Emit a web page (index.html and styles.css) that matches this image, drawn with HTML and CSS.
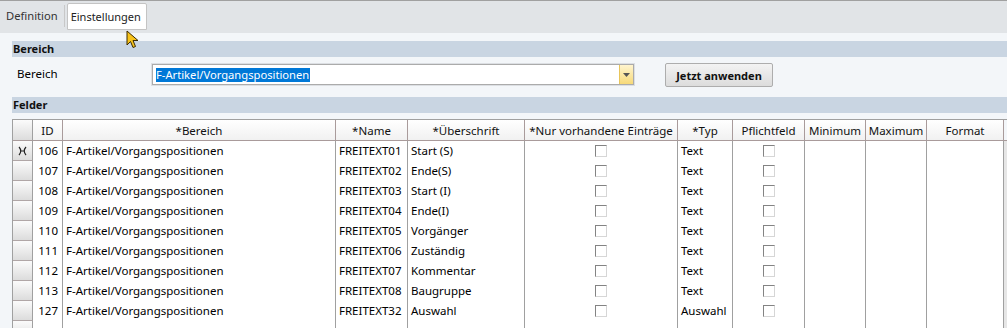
FILE: index.html
```html
<!DOCTYPE html>
<html lang="de">
<head>
<meta charset="utf-8">
<title>Einstellungen</title>
<link rel="stylesheet" href="styles.css">
</head>
<body>
<div class="tabbar">
  <div class="tab">Definition</div>
  <div class="tab-sep"></div>
  <div class="tab active">Einstellungen</div>
</div>
<div class="content">
  <div class="section">Bereich</div>
  <div class="form-row">
    <div class="label">Bereich</div>
    <div class="combo">
      <div class="combo-inner">
        <div class="combo-field"><span class="sel">F-Artikel/Vorgangspositionen</span></div>
        <div class="combo-btn"><svg width="7" height="4" viewBox="0 0 7 4"><path d="M0 0H7L3.5 4Z" fill="#555"/></svg></div>
      </div>
    </div>
    <button class="btn">Jetzt anwenden</button>
  </div>
  <div class="section section-felder">Felder</div>
  <div class="grid">
    <div class="rh hdr-rh"></div>
    <div class="hc">ID</div>
    <div class="hc">*Bereich</div>
    <div class="hc">*Name</div>
    <div class="hc">*Überschrift</div>
    <div class="hc">*Nur vorhandene Einträge</div>
    <div class="hc">*Typ</div>
    <div class="hc">Pflichtfeld</div>
    <div class="hc">Minimum</div>
    <div class="hc">Maximum</div>
    <div class="hc">Format</div>
    <div class="hc hc-end"></div>

    <div class="rh"><svg width="9" height="10" viewBox="0 0 9 10"><path d="M1 1Q4.5 5 1 9M8 1Q4.5 5 8 9M2.5 5H6.5" stroke="#222" stroke-width="1.2" fill="none"/></svg></div>
    <div class="c num">106</div><div class="c">F-Artikel/Vorgangspositionen</div><div class="c">FREITEXT01</div><div class="c">Start (S)</div><div class="c ctr"><span class="cb"></span></div><div class="c">Text</div><div class="c ctr"><span class="cb"></span></div><div class="c"></div><div class="c"></div><div class="c"></div><div class="c end"></div>

    <div class="rh"></div>
    <div class="c num">107</div><div class="c">F-Artikel/Vorgangspositionen</div><div class="c">FREITEXT02</div><div class="c">Ende(S)</div><div class="c ctr"><span class="cb"></span></div><div class="c">Text</div><div class="c ctr"><span class="cb"></span></div><div class="c"></div><div class="c"></div><div class="c"></div><div class="c end"></div>

    <div class="rh"></div>
    <div class="c num">108</div><div class="c">F-Artikel/Vorgangspositionen</div><div class="c">FREITEXT03</div><div class="c">Start (I)</div><div class="c ctr"><span class="cb"></span></div><div class="c">Text</div><div class="c ctr"><span class="cb"></span></div><div class="c"></div><div class="c"></div><div class="c"></div><div class="c end"></div>

    <div class="rh"></div>
    <div class="c num">109</div><div class="c">F-Artikel/Vorgangspositionen</div><div class="c">FREITEXT04</div><div class="c">Ende(I)</div><div class="c ctr"><span class="cb"></span></div><div class="c">Text</div><div class="c ctr"><span class="cb"></span></div><div class="c"></div><div class="c"></div><div class="c"></div><div class="c end"></div>

    <div class="rh"></div>
    <div class="c num">110</div><div class="c">F-Artikel/Vorgangspositionen</div><div class="c">FREITEXT05</div><div class="c">Vorgänger</div><div class="c ctr"><span class="cb"></span></div><div class="c">Text</div><div class="c ctr"><span class="cb"></span></div><div class="c"></div><div class="c"></div><div class="c"></div><div class="c end"></div>

    <div class="rh"></div>
    <div class="c num">111</div><div class="c">F-Artikel/Vorgangspositionen</div><div class="c">FREITEXT06</div><div class="c">Zuständig</div><div class="c ctr"><span class="cb"></span></div><div class="c">Text</div><div class="c ctr"><span class="cb"></span></div><div class="c"></div><div class="c"></div><div class="c"></div><div class="c end"></div>

    <div class="rh"></div>
    <div class="c num">112</div><div class="c">F-Artikel/Vorgangspositionen</div><div class="c">FREITEXT07</div><div class="c">Kommentar</div><div class="c ctr"><span class="cb"></span></div><div class="c">Text</div><div class="c ctr"><span class="cb"></span></div><div class="c"></div><div class="c"></div><div class="c"></div><div class="c end"></div>

    <div class="rh"></div>
    <div class="c num">113</div><div class="c">F-Artikel/Vorgangspositionen</div><div class="c">FREITEXT08</div><div class="c">Baugruppe</div><div class="c ctr"><span class="cb"></span></div><div class="c">Text</div><div class="c ctr"><span class="cb"></span></div><div class="c"></div><div class="c"></div><div class="c"></div><div class="c end"></div>

    <div class="rh"></div>
    <div class="c num">127</div><div class="c">F-Artikel/Vorgangspositionen</div><div class="c">FREITEXT32</div><div class="c">Auswahl</div><div class="c ctr"><span class="cb"></span></div><div class="c">Auswahl</div><div class="c ctr"><span class="cb"></span></div><div class="c"></div><div class="c"></div><div class="c"></div><div class="c end"></div>

    <div class="rh"></div>
    <div class="c"></div><div class="c"></div><div class="c"></div><div class="c"></div><div class="c"></div><div class="c"></div><div class="c"></div><div class="c"></div><div class="c"></div><div class="c"></div><div class="c end"></div>
  </div>
</div>
<svg class="cursor" width="14" height="20" viewBox="0 0 14 20"><path d="M1 1V15L4.5 11.5L7 17.5L9.5 16.5L7 10.5H12Z" fill="#f7c21b" stroke="#3a2a00" stroke-width="1" stroke-linejoin="round"/></svg>
</body>
</html>
```

FILE: styles.css
```css
html, body {
  margin: 0;
  padding: 0;
}
body {
  width: 1007px;
  height: 328px;
  overflow: hidden;
  position: relative;
  font-family: "Noto Sans", "Open Sans", sans-serif;
  font-size: 11px;
  color: #000;
  background: #f3f6f9;
}
.tabbar {
  height: 32px;
  border-top: 1px solid #a0a0a0;
  background: #e1e4e7;
  display: flex;
  align-items: flex-start;
}
.tab {
  font-size: 11.2px;
  color: #333;
  height: 26px;
  line-height: 26px;
  margin-top: 2px;
  padding: 0 6px;
}
.tab-sep {
  width: 1px;
  height: 22px;
  margin-top: 4px;
  background: #c8c8c8;
  margin-right: 2px;
}
.tab.active {
  background: #fff;
  border: 1px solid #c4c4c4;
  border-radius: 2px 2px 0 0;
  padding: 0 5px 0 3px;
  color: #222;
  font-size: 11px;
  height: 25px;
  line-height: 25px;
}
.content {
  padding: 8px 0 0 12px;
}
.section {
  height: 16px;
  line-height: 16px;
  background: #c9d5e2;
  font-weight: bold;
  padding-left: 1px;
  font-size: 11px;
  color: #111;
}
.form-row {
  display: flex;
  align-items: flex-start;
  margin-top: 6px;
  height: 24px;
}
.label {
  width: 134px;
  margin-left: 5px;
  line-height: 21px;
  font-size: 11.5px;
}
.combo {
  width: 484px;
  height: 23px;
  box-sizing: border-box;
  border: 1px solid #dcdfe3;
  background: #fff;
}
.combo-inner {
  height: 100%;
  box-sizing: border-box;
  border: 1px solid #ababab;
  display: flex;
}
.combo-field {
  flex: 1;
  padding: 2px 0 0 3px;
}
.sel {
  display: inline-block;
  background: #0078d7;
  color: #fff;
  line-height: 14px;
  height: 14px;
  font-size: 11.2px;
  padding-right: 1px;
}
.combo-btn {
  width: 13px;
  border-left: 1px solid #e8c55a;
  background: linear-gradient(#fff5cf, #f7d979);
  display: flex;
  align-items: center;
  justify-content: center;
}
.btn {
  margin-left: 30px;
  width: 108px;
  height: 24px;
  border: 1px solid #adadad;
  border-radius: 2px;
  background: linear-gradient(#f3f3f3, #dcdcdc);
  font-family: "Noto Sans", "Open Sans", sans-serif;
  font-weight: bold;
  font-size: 11px;
  color: #111;
  padding: 0;
}
.section-felder {
  margin-top: 10px;
}
.grid {
  margin-top: 6px;
  display: grid;
  grid-template-columns: 20px 30px 273px 72px 117px 153px 55px 72px 61px 61px 77px 1fr;
  grid-auto-rows: 20px;
  grid-template-rows: 21px;
  border-top: 1px solid #a0a0a0;
  border-left: 1px solid #a0a0a0;
  background: #fff;
}
.hc {
  box-sizing: border-box;
  border-right: 1px solid #a99b9b;
  border-bottom: 1px solid #a99b9b;
  background: linear-gradient(#ffffff, #f1f1f1);
  display: flex;
  align-items: center;
  justify-content: center;
  white-space: nowrap;
  overflow: hidden;
  font-size: 11.5px;
  color: #111;
}
.hc-end {
  border-right: none;
  background: #f3f6f9;
}
.rh {
  box-sizing: border-box;
  border-right: 1px solid #a0a0a0;
  border-bottom: 1px solid #b0a6a6;
  background: linear-gradient(#fbfbfb, #dcdcdc);
  display: flex;
  align-items: center;
  justify-content: center;
}
.hdr-rh {
  border-bottom-color: #a99b9b;
}
.c {
  box-sizing: border-box;
  border-right: 1px solid #a0a0a0;
  display: flex;
  align-items: center;
  padding: 0 0 1px 3px;
  white-space: nowrap;
  overflow: hidden;
  font-size: 11.5px;
}
.c.num {
  justify-content: flex-end;
  padding: 0 4px 1px 0;
}
.c.ctr {
  justify-content: center;
  padding: 0;
}
.c.end {
  border-right: none;
  background: #e6e6e6;
}
.cb {
  width: 12px;
  height: 12px;
  box-sizing: border-box;
  border: 1px solid;
  border-color: #838383 #d6d6d6 #d6d6d6 #838383;
  background: #fff;
}
.cursor {
  position: absolute;
  left: 126px;
  top: 30px;
}
```
